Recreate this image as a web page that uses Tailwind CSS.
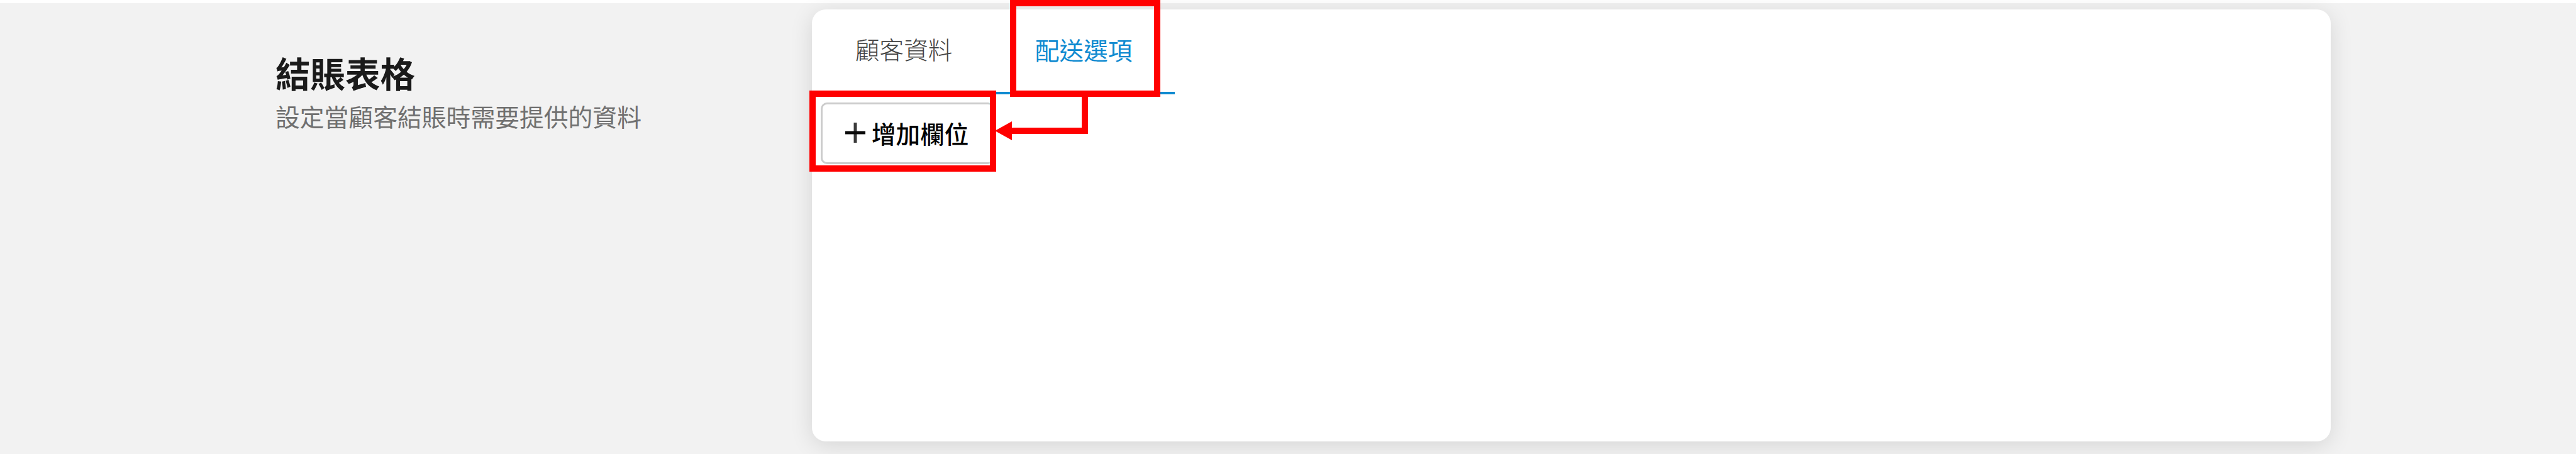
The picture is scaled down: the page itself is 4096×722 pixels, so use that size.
<!DOCTYPE html>
<html lang="zh-Hant">
<head>
    <meta charset="UTF-8">
    <meta name="viewport" content="width=device-width, initial-scale=1.0">
    <title>結賬表格</title>
    <script src="https://cdn.jsdelivr.net/npm/@tailwindcss/browser@4"></script>
</head>
<body class="bg-white overflow-hidden font-['Noto_Sans_CJK_TC',sans-serif]">
    <div class="relative w-[4096px] h-[722px] pt-[5px] overflow-hidden">
        <main class="flex h-[717px] bg-[#f2f2f2] pl-[438px] pt-[10px]">
            <!-- Section heading -->
            <div class="w-[853px] pt-[61px]">
                <h1 class="text-[55.5px] leading-[79px] font-bold text-[#1a1a1a]">結賬表格</h1>
                <p class="text-[38.8px] leading-[58px] text-[#707070]">設定當顧客結賬時需要提供的資料</p>
            </div>

            <!-- Form card -->
            <section class="w-[2415px] h-[687px] bg-white rounded-[22px] shadow-[0_6px_36px_rgba(0,0,0,0.12)]">
                <nav class="flex h-[135px] text-[38.6px] leading-[58px]">
                    <a class="w-[289px] pl-[69px] pt-[33px] font-light text-[#444444]">顧客資料</a>
                    <a class="w-[288px] pl-[66px] pt-[34px] text-[#0f8ad0] border-b-4 border-[#0f8ad0]">配送選項</a>
                </nav>
                <button class="ml-[14px] mt-[13px] w-[276px] h-[98px] flex items-center pl-[35px] pb-[3px] gap-[9px] border-3 border-[#cccccc] rounded-[10px] bg-white text-[38.6px] leading-[58px] font-medium text-black">
                    <svg class="w-[34px] h-[34px]" viewBox="0 0 34 34" fill="none">
                        <path d="M17 1v32" stroke="#3a3a3a" stroke-width="5" />
                        <path d="M1 17h32" stroke="#0a0a0a" stroke-width="5" />
                    </svg>
                    增加欄位
                </button>
            </section>
        </main>

        <!-- Highlight boxes and arrow over the page -->
        <div class="absolute left-[1606px] top-0 w-[239px] h-[154px] border-10 border-[#ff0000]"></div>
        <div class="absolute left-[1287px] top-[144px] w-[297px] h-[129px] border-10 border-[#ff0000]"></div>
        <svg class="absolute left-[1582px] top-[150px] w-[150px] h-[76px]" viewBox="0 0 150 76">
            <path d="M143 0v58H24" fill="none" stroke="#ff0000" stroke-width="10" />
            <path d="M0 58L27 43v30z" fill="#ff0000" />
        </svg>
    </div>
</body>
</html>
